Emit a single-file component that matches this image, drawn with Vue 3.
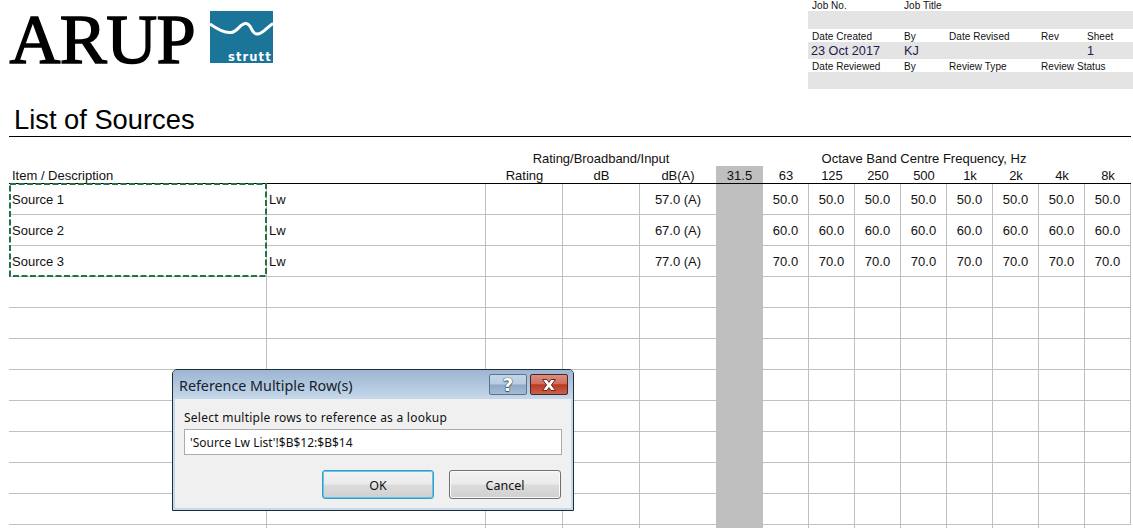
<script setup>
const bands = ['63', '125', '250', '500', '1k', '2k', '4k', '8k']
const rows = [
  { name: 'Source 1', type: 'Lw', dba: '57.0 (A)', value: '50.0' },
  { name: 'Source 2', type: 'Lw', dba: '67.0 (A)', value: '60.0' },
  { name: 'Source 3', type: 'Lw', dba: '77.0 (A)', value: '70.0' },
  ...Array.from({ length: 9 }, () => ({ name: '', type: '', dba: '', value: '' }))
]
</script>

<template>
  <div class="page">
    <header class="top">
      <svg class="arup" width="201" height="82" viewBox="0 0 201 82">
        <text x="0.5" y="63" class="arup-text">ARUP</text>
      </svg>
      <svg class="strutt" width="63" height="52" viewBox="0 0 63 52">
        <rect width="63" height="52" fill="#1a7599" />
        <path d="M0 13 C8 19 14 22 21 21.5 C28 21 30 12 36 12.5 C42 13 41 23 47 23 C53 23 57 16 63 12.5" fill="none" stroke="#fff" stroke-width="3" />
        <text x="18" y="50" class="strutt-text">strutt</text>
      </svg>
      <div class="job">
        <div class="job-row labels"><span>Job No.</span><span>Job Title</span></div>
        <div class="job-row bar bar-a"></div>
        <div class="job-row labels lab-b"><span>Date Created</span><span>By</span><span>Date Revised</span><span>Rev</span><span>Sheet</span></div>
        <div class="job-row bar values"><span>23 Oct 2017</span><span>KJ</span><span></span><span></span><span>1</span></div>
        <div class="job-row labels lab-c"><span>Date Reviewed</span><span>By</span><span>Review Type</span><span>Review Status</span></div>
        <div class="job-row bar bar-a"></div>
      </div>
    </header>

    <h1 class="title">List of Sources</h1>

    <section class="sheet">
      <div class="grid">
        <div class="head span-first"></div>
        <div class="head span-rating">Rating/Broadband/Input</div>
        <div class="head"></div>
        <div class="head span-octave">Octave Band Centre Frequency, Hz</div>
        <div class="head"></div>

        <div class="sub left">Item / Description</div>
        <div class="sub"></div>
        <div class="sub">Rating</div>
        <div class="sub">dB</div>
        <div class="sub">dB(A)</div>
        <div class="sub gray">31.5</div>
        <div v-for="b in bands" :key="b" class="sub">{{ b }}</div>

        <template v-for="(r, i) in rows" :key="i">
          <div class="cell left first">{{ r.name }}</div>
          <div class="cell left">{{ r.type }}</div>
          <div class="cell"></div>
          <div class="cell"></div>
          <div class="cell nr">{{ r.dba }}</div>
          <div class="cell gray"></div>
          <div v-for="b in bands" :key="b" class="cell">{{ r.value }}</div>
        </template>
      </div>

      <svg class="ants" width="258" height="94" viewBox="0 0 258 94">
        <rect x="1" y="1" width="256" height="92" fill="none" stroke="#217346" stroke-width="2" stroke-dasharray="6 2.5" />
      </svg>
    </section>

    <div class="dialog">
      <div class="titlebar">
        <span class="dlg-title">Reference Multiple Row(s)</span>
        <div class="ctl help"><span>?</span></div>
        <div class="ctl close">
          <svg width="18" height="14" viewBox="0 0 18 14">
            <path d="M2.5 1.5 H7 L9 4.4 L11 1.5 H15.5 L11.4 7 L15.5 12.5 H11 L9 9.6 L7 12.5 H2.5 L6.6 7 Z" fill="#fff" stroke="#6b2a22" stroke-width="1" />
          </svg>
        </div>
      </div>
      <div class="dlg-body">
        <div class="prompt">Select multiple rows to reference as a lookup</div>
        <div class="input">'Source Lw List'!$B$12:$B$14</div>
        <div class="actions">
          <div class="btn ok">OK</div>
          <div class="btn">Cancel</div>
        </div>
      </div>
    </div>
  </div>
</template>

<style>
html, body { margin: 0; background: #fff; overflow: hidden; }
</style>

<style scoped>
.page {
  position: relative;
  width: 1133px;
  height: 528px;
  overflow: hidden;
  padding-left: 9px;
  box-sizing: border-box;
  background: #fff;
  color: #000;
  font-family: "Liberation Sans", Arial, sans-serif;
}
.top {
  display: flex;
  align-items: flex-start;
  height: 92px;
}
.arup { display: block; flex: none; }
.arup-text {
  font-family: "Liberation Serif", serif;
  font-size: 70.5px;
  letter-spacing: -0.6px;
  fill: #000;
  stroke: #000;
  stroke-width: 1.5px;
}
.strutt { margin-top: 11px; display: block; flex: none; }
.strutt-text {
  font-family: "DejaVu Sans", sans-serif;
  font-weight: 700;
  font-size: 11.5px;
  letter-spacing: 1.1px;
  fill: #fff;
}
.job {
  margin-left: 535px;
  width: 325px;
  flex: none;
  font-size: 10px;
  color: #111;
}
.job-row {
  display: grid;
  grid-template-columns: 92px 45px 92px 46px 1fr;
  padding-left: 4px;
  white-space: nowrap;
}
.labels { height: 11px; line-height: 11px; letter-spacing: 0.05px; }
.lab-b, .lab-c { height: 13px; line-height: 15px; }
.bar { background: #e4e4e4; }
.bar-a { height: 18px; }
.bar-a:last-child { height: 17px; }
.values {
  height: 17px;
  line-height: 18px;
  font-size: 12.67px;
  color: #241a52;
  padding-left: 3px;
  grid-template-columns: 93px 45px 92px 46px 1fr;
}
.title {
  margin: 0;
  width: 1122px;
  padding-top: 12px;
  box-sizing: border-box;
  border-bottom: 1px solid #000;
  height: 45px;
  font-size: 27.3px;
  line-height: 32px;
  font-weight: 400;
  text-indent: 5px;
}
.sheet {
  position: relative;
  width: 1122px;
  margin-top: 13px;
}
.grid {
  display: grid;
  grid-template-columns: 258px 219px 77px 77px 76px 47px repeat(8, 46px);
  grid-auto-rows: 31px;
  grid-template-rows: 16px 18px;
  font-size: 13px;
  color: #111;
}
.head { text-align: center; line-height: 17px; white-space: nowrap; }
.span-first { grid-column: span 2; }
.span-rating { grid-column: span 3; letter-spacing: -0.03px; }
.span-octave { grid-column: span 7; }
.sub {
  text-align: center;
  line-height: 19px;
  height: 18px;
  box-sizing: border-box;
  border-bottom: 1px solid #000;
}
.left { text-align: left; padding-left: 2px; }
.sub.left, .first { padding-left: 3px; }
.cell {
  box-sizing: border-box;
  border-right: 1px solid #c0c0c0;
  border-bottom: 1px solid #c0c0c0;
  text-align: center;
  line-height: 32px;
}
.cell.left { text-align: left; }
.cell:last-child { border-right: 0; }
.nr { border-right: 0; }
.gray { background: #bfbfbf; }
.cell.gray { border-color: #bfbfbf; }
.ants { position: absolute; left: 0; top: 33px; display: block; }

.dialog {
  position: absolute;
  left: 172px;
  top: 369px;
  width: 402px;
  height: 142px;
  box-sizing: border-box;
  border: 1px solid #1f2d38;
  border-radius: 5px 5px 0 0;
  background: #c3d9ec;
  padding: 0 2px 2px;
  display: flex;
  flex-direction: column;
  font-family: "Noto Sans", sans-serif;
  color: #111;
}
.titlebar {
  height: 29px;
  margin: 0 -2px;
  padding: 4px 5px 0 6px;
  box-sizing: border-box;
  background: linear-gradient(#9cb5d2, #c6d8ea);
  border-radius: 4px 4px 0 0;
  display: flex;
  align-items: flex-start;
  flex: none;
}
.dlg-title {
  flex: 1;
  font-size: 14.3px;
  line-height: 23px;
  color: #15202c;
  white-space: nowrap;
}
.ctl {
  width: 38px;
  height: 21px;
  box-sizing: border-box;
  border-radius: 2px;
  display: flex;
  align-items: center;
  justify-content: center;
}
.help {
  border: 1px solid #5f7288;
  background: linear-gradient(#c4d6e8 0%, #b6cce2 48%, #8ea9c8 52%, #a4bcd7 100%);
  margin-right: 3px;
  color: #fff;
  font: 700 18px/19px "DejaVu Sans", sans-serif;
  text-shadow: 0 0 1px #3a4a5c, 0 0 1px #3a4a5c, 0 1px 1px #3a4a5c;
}
.close {
  border: 1px solid #4d2420;
  background: linear-gradient(#db8f82 0%, #cf6f5e 45%, #b93a22 52%, #c9614c 100%);
}
.close svg { display: block; }
.dlg-body {
  flex: 1;
  background: #f0f0f0;
  padding: 10px 9px 0;
  box-sizing: border-box;
}
.prompt { font-size: 12px; letter-spacing: 0.25px; line-height: 17px; height: 16px; white-space: nowrap; }
.input {
  margin-top: 4px;
  height: 26px;
  width: 378px;
  box-sizing: border-box;
  border: 1px solid #ababab;
  background: #fff;
  padding-left: 5px;
  font-size: 12px;
  letter-spacing: 0;
  line-height: 26px;
  white-space: nowrap;
}
.actions {
  display: flex;
  justify-content: flex-end;
  gap: 15px;
  margin-top: 15px;
  padding-right: 1px;
}
.btn {
  width: 112px;
  height: 29px;
  box-sizing: border-box;
  border: 1px solid #707070;
  border-radius: 3px;
  background: linear-gradient(#f3f3f3 0%, #ebebeb 48%, #dcdcdc 52%, #cfcfcf 100%);
  text-align: center;
  font-size: 12.5px;
  line-height: 29px;
  box-shadow: inset 0 0 0 1px #fbfbfb;
}
.ok {
  border: 1px solid #3c9ac4;
  box-shadow: inset 0 0 0 1px #62c6ea;
}
</style>
